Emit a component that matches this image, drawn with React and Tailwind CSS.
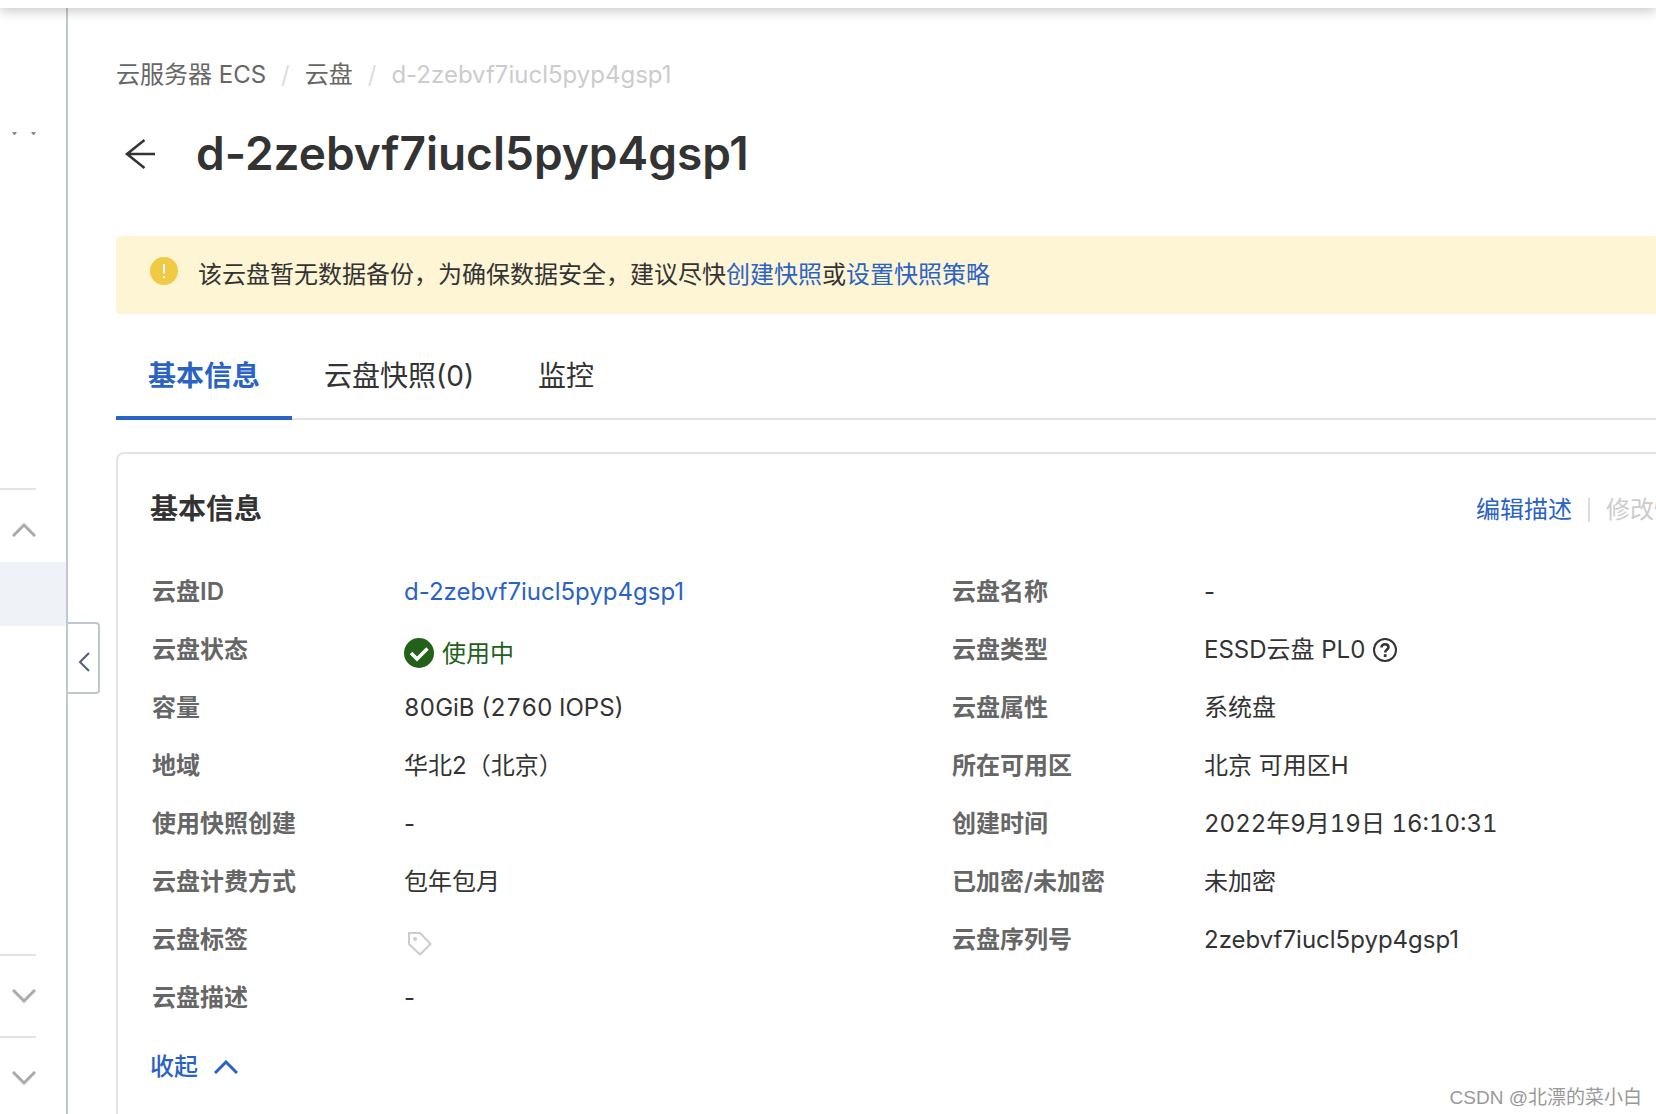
import React from 'react'

const SANS = 'font-[Inter,"Noto_Sans_CJK_SC",sans-serif]'

function Chevron({ className, up }) {
  return (
    <svg viewBox="0 0 24 14" className={className} fill="none" stroke="currentColor" strokeWidth="3" aria-hidden="true">
      <path d={up ? 'M1 13 12 2l11 11' : 'M1 1l11 11L23 1'} />
    </svg>
  )
}

function QuestionIcon() {
  return (
    <svg viewBox="0 0 24 24" className="size-6" fill="none" stroke="currentColor" strokeWidth="2" aria-hidden="true">
      <circle cx="12" cy="12" r="11" />
      <path d="M8.500 9.600c0-2 1.500-3.300 3.500-3.300s3.500 1.200 3.500 3c0 2.200-3.300 2.500-3.300 5.200" strokeWidth="2.600" />
      <path d="M10.800 16.200h2.800v2.800h-2.800z" fill="currentColor" stroke="none" />
    </svg>
  )
}

function TagIcon() {
  return (
    <svg viewBox="0 0 24 24" className="size-6" fill="none" stroke="currentColor" strokeWidth="2" aria-hidden="true">
      <path d="M1 1h11l10.500 11L12 22.500 1 12z" />
      <circle cx="7" cy="7" r="2" fill="currentColor" stroke="none" />
    </svg>
  )
}

function Status() {
  return (
    <span className="flex items-center gap-2 pt-2 text-[#23611a]">
      <svg viewBox="0 0 30 30" className="mb-0.5 size-[30px]" aria-hidden="true">
        <circle cx="15" cy="15" r="15" fill="currentColor" />
        <path d="M7 15l6 6L23.500 10.500" fill="none" stroke="#fff" strokeWidth="3.500" />
      </svg>
      使用中
    </span>
  )
}

const LEFT = [
  ['云盘ID', <a href="#disk" className="text-[#2a62c5]">d-2zebvf7iucl5pyp4gsp1</a>],
  ['云盘状态', <Status />],
  ['容量', <span className="tabular-nums">80GiB (2760 IOPS)</span>],
  ['地域', '华北2（北京）'],
  ['使用快照创建', '-'],
  ['云盘计费方式', '包年包月'],
  ['云盘标签', <button type="button" aria-label="编辑标签" className="block pt-2 pl-1 text-[#ccc]"><TagIcon /></button>],
  ['云盘描述', '-'],
]

const RIGHT = [
  ['云盘名称', '-'],
  ['云盘类型', <span className="flex items-center gap-2">ESSD云盘 PL0 <button type="button" aria-label="云盘类型说明"><QuestionIcon /></button></span>],
  ['云盘属性', '系统盘'],
  ['所在可用区', '北京 可用区H'],
  ['创建时间', <span className="tabular-nums">2022年9月19日 16:10:31</span>],
  ['已加密/未加密', '未加密'],
  ['云盘序列号', '2zebvf7iucl5pyp4gsp1'],
]

function InfoList({ rows }) {
  return (
    <dl className="pl-0.5">
      {rows.map(([label, value]) => (
        <div key={label} className="flex h-[58px] items-center">
          <dt className="w-[252px] shrink-0 font-semibold text-[#666]">{label}</dt>
          <dd className="whitespace-nowrap">{value}</dd>
        </div>
      ))}
    </dl>
  )
}

function Sidebar() {
  return (
    <aside className="relative w-[68px] shrink-0 border-r-2 border-[#c1c7d0] text-[#aaa]">
      <div className="flex h-[480px] pt-[124px] pl-3">
        <svg viewBox="0 0 24 3" className="h-[3px] w-6" fill="#888" aria-hidden="true">
          <path d="M0 0h5L3 3H2zM19 0h5l-2 3h-1z" />
        </svg>
      </div>
      <div className="h-[74px] w-9 border-t-2 border-[#e3e4e6] pt-[33px] pl-3">
        <button type="button" aria-label="收起菜单" className="block"><Chevron up className="h-3.5 w-6" /></button>
      </div>
      <div className="h-16 bg-[#eff3f8]" />
      <div className="h-[328px]" />
      <div className="h-[82px] w-9 border-t-2 border-[#e3e4e6] pt-[33px] pl-3">
        <button type="button" aria-label="展开菜单" className="block"><Chevron className="h-3.5 w-6" /></button>
      </div>
      <div className="w-9 border-t-2 border-[#e3e4e6] pt-[33px] pl-3">
        <button type="button" aria-label="展开菜单" className="block"><Chevron className="h-3.5 w-6" /></button>
      </div>
      <button
        type="button"
        aria-label="收起侧栏"
        className="absolute top-[614px] left-full ml-0.5 flex h-[72px] w-8 items-center justify-center rounded-r border-2 border-l-0 border-[#c1c7d0] bg-white pt-2 pl-0.5 text-[#4f5f7b]"
      >
        <svg viewBox="0 0 12 20" className="h-5 w-3" fill="none" stroke="currentColor" strokeWidth="2" aria-hidden="true">
          <path d="M11 1 2 10l9 9" />
        </svg>
      </button>
    </aside>
  )
}

export default function App() {
  return (
    <div className={`${SANS} relative flex min-h-screen flex-col overflow-hidden bg-white text-2xl text-[#333]`}>
      <header className="z-10 h-2 shrink-0 bg-white shadow-[0_2px_12px_rgba(0,0,0,0.3)]" />
      <div className="flex flex-1">
        <Sidebar />
        <main className="min-w-0 flex-1 pl-12">
          {/* content runs past the right edge of the window */}
          <div className="flex min-h-full w-[calc(100%+128px)] flex-col">
            <nav aria-label="面包屑" className="mt-[51px] flex h-8 items-center gap-[15px] text-[#666]">
              <a href="#ecs">云服务器 ECS</a>
              <span className="text-[#ddd]">/</span>
              <a href="#disks">云盘</a>
              <span className="text-[#ddd]">/</span>
              <span className="text-[#ccc]">d-2zebvf7iucl5pyp4gsp1</span>
            </nav>

            <div className="mt-[31px] flex h-16 items-center gap-10 pl-2">
              <button type="button" aria-label="返回">
                <svg viewBox="0 0 32 32" className="size-8" fill="none" stroke="currentColor" strokeWidth="2.500" aria-hidden="true">
                  <path d="M31 16H2M20.500 2 3 16l17.500 14" />
                </svg>
              </button>
              <h1 className="text-[46px] font-semibold">d-2zebvf7iucl5pyp4gsp1</h1>
            </div>

            <div role="alert" className="mt-[50px] flex h-[78px] items-center rounded bg-[#fef5d5] pl-[34px]">
              <svg viewBox="0 0 28 28" className="mr-5 mb-2 size-7" aria-hidden="true">
                <circle cx="14" cy="14" r="14" fill="#f1c944" />
                <path d="M13 7h2v9.500h-2zM13 19h2v2h-2z" fill="#fff" />
              </svg>
              <p>
                该云盘暂无数据备份，为确保数据安全，建议尽快<a href="#snapshot" className="text-[#2a62c5]">创建快照</a>或<a href="#policy" className="text-[#2a62c5]">设置快照策略</a>
              </p>
            </div>

            <div role="tablist" className="mt-4 flex h-[90px] border-b-2 border-[#e3e4e6] text-[28px]">
              <button type="button" role="tab" aria-selected="true" className="-mb-0.5 border-b-4 border-[#2a62c5] px-8 pt-2 font-semibold text-[#2a62c5]">基本信息</button>
              <button type="button" role="tab" aria-selected="false" className="px-8 pt-1.5">云盘快照(0)</button>
              <button type="button" role="tab" aria-selected="false" className="px-8 pt-1.5">监控</button>
            </div>

            <section className="mt-8 flex-1 rounded-t-lg border-2 border-b-0 border-[#e3e4e6] px-8 pt-9">
              <div className="flex h-10 items-center justify-between">
                <h2 className="text-[28px] font-semibold">基本信息</h2>
                <div className="flex items-center gap-4">
                  <a href="#edit" className="text-[#2a62c5]">编辑描述</a>
                  <span className="h-6 w-0.5 bg-[#ddd]" />
                  <button type="button" disabled className="text-[#ccc]">修改性能级别</button>
                </div>
              </div>
              <div className="mt-[33px] grid grid-cols-2">
                <InfoList rows={LEFT} />
                <InfoList rows={RIGHT} />
              </div>
              <button type="button" className="mt-5 flex h-10 items-center gap-4 font-medium text-[#2a62c5]">
                收起
                <Chevron up className="h-3.5 w-6" />
              </button>
            </section>
          </div>
        </main>
      </div>
      <span className='absolute right-3.5 bottom-1 font-["Liberation_Sans","Noto_Sans_CJK_SC",sans-serif] text-[19px] text-[#999]'>CSDN @北漂的菜小白</span>
    </div>
  )
}
